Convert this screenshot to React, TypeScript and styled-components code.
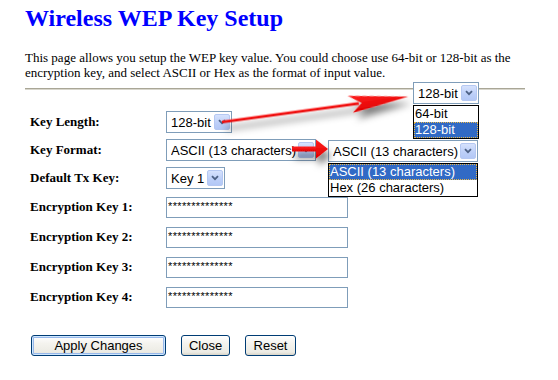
import React from "react";
import styled, { createGlobalStyle } from "styled-components";

const GlobalStyle = createGlobalStyle`
  html, body { margin: 0; padding: 0; background: #ffffff; }
  #root { width: 558px; height: 380px; overflow: hidden; }
`;

const Page = styled.div`
  position: relative;
  width: 558px;
  height: 380px;
  box-sizing: border-box;
  padding: 5px 0 0 25px;
  font-family: "Liberation Serif", "Times New Roman", serif;
  color: #000;
`;

const Title = styled.h1`
  margin: 0;
  font-size: 24px;
  line-height: 27px;
  font-weight: bold;
  color: #0000ff;
`;

const Intro = styled.p`
  margin: 19px 0 0 0;
  width: 500px;
  font-size: 13px;
  line-height: 14.5px;
`;

const Rule = styled.div`
  width: 500px;
  height: 0;
  margin-top: 8px;
  border-top: 1px solid #a9a696;
  border-bottom: 1px solid #d8d6cc;
`;

const Form = styled.div`
  margin-top: 18px;
  display: flex;
  flex-direction: column;
`;

const Row = styled.div<{ $h: number }>`
  display: grid;
  grid-template-columns: 141px auto;
  align-items: center;
  height: ${(p) => p.$h}px;
`;

const Label = styled.span`
  padding-left: 5px;
  font-size: 13px;
  font-weight: bold;
  white-space: nowrap;
`;

const SelectBox = styled.div<{ $w: number }>`
  width: ${(p) => p.$w}px;
  height: 22px;
  box-sizing: border-box;
  border: 1px solid #7f9db9;
  background: #ffffff;
  display: flex;
  align-items: center;
  padding: 2px 1px 2px 4px;
  font-family: "Liberation Sans", Arial, sans-serif;
  font-size: 13px;
  color: #000;
`;

const SelectValue = styled.span`
  flex: 1;
  white-space: nowrap;
  overflow: hidden;
`;

const DropButton = styled.span`
  width: 16px;
  height: 16px;
  box-sizing: border-box;
  flex: none;
  border: 1px solid #b5c8f2;
  border-radius: 2px;
  background: linear-gradient(#d6e2fd, #bccff8 60%, #b3c8f6);
  display: flex;
  align-items: center;
  justify-content: center;
`;

const Chevron = () => (
  <svg width="8" height="6" viewBox="0 0 8 6">
    <path d="M1 1.2 L4 4.2 L7 1.2" fill="none" stroke="#4d6185" strokeWidth="1.8" />
  </svg>
);

const Select = ({ width, value }: { width: number; value: string }) => (
  <SelectBox $w={width}>
    <SelectValue>{value}</SelectValue>
    <DropButton>
      <Chevron />
    </DropButton>
  </SelectBox>
);

const KeyInput = styled.input`
  width: 182px;
  height: 21px;
  box-sizing: border-box;
  border: 1px solid #7f9db9;
  padding: 0 0 2px 1px;
  margin: 0;
  font-family: "Liberation Sans", Arial, sans-serif;
  font-size: 11px;
  letter-spacing: 0.35px;
  color: #000;
  background: #fff;
  outline: none;
`;

const Buttons = styled.div`
  margin-top: 23px;
  padding-left: 6px;
  display: flex;
  gap: 15px;
`;

const Button = styled.button<{ $w: number; $default?: boolean }>`
  width: ${(p) => p.$w}px;
  height: 21px;
  box-sizing: border-box;
  margin: 0;
  padding: 0;
  border: 1px solid #003c74;
  border-radius: 3px;
  background: linear-gradient(#ffffff, #f4f3ee 40%, #ecebe4 85%, #d8d4c8);
  font-family: "Liberation Sans", Arial, sans-serif;
  font-size: 13px;
  color: #000;
  box-shadow: ${(p) =>
    p.$default ? "inset 0 0 0 1px #cee7ff, inset 0 0 0 2px #98b8ea" : "none"};
`;

const Popup = styled.div<{ $x: number; $y: number }>`
  position: absolute;
  left: ${(p) => p.$x}px;
  top: ${(p) => p.$y}px;
  display: flex;
  flex-direction: column;
  gap: 1px;
`;

const ListBox = styled.div<{ $w: number }>`
  width: ${(p) => p.$w}px;
  box-sizing: border-box;
  border: 1px solid #000;
  background: #fff;
  font-family: "Liberation Sans", Arial, sans-serif;
  font-size: 13px;
`;

const Option = styled.div<{ $selected?: boolean }>`
  height: 16px;
  line-height: 16px;
  padding-left: 1px;
  box-sizing: border-box;
  white-space: nowrap;
  color: ${(p) => (p.$selected ? "#fff" : "#000")};
  background: ${(p) => (p.$selected ? "#316ac5" : "#fff")};
  outline: ${(p) => (p.$selected ? "1px dotted #e9b84a" : "none")};
  outline-offset: -1px;
`;

const Overlay = styled.svg`
  position: absolute;
  left: 0;
  top: 0;
  pointer-events: none;
`;

const Arrows = () => {
  const L = 188;
  return (
    <Overlay width="558" height="380" viewBox="0 0 558 380">
      <defs>
        <filter id="shadow" x="-20%" y="-50%" width="140%" height="250%">
          <feDropShadow dx="3" dy="7" stdDeviation="3.5" floodColor="#000" floodOpacity="0.5" />
        </filter>
        <linearGradient id="red" x1="0" y1="0" x2="0" y2="1">
          <stop offset="0" stopColor="#ff2020" />
          <stop offset="1" stopColor="#e00000" />
        </linearGradient>
      </defs>
      <g filter="url(#shadow)" transform="translate(222 122) rotate(-7.75)">
        <rect x="0" y="-1.4" width={L - 50} height="2.8" fill="url(#red)" />
        <polygon
          points={`${L},0 ${L - 60},-9 ${L - 47},0 ${L - 57},8.5`}
          fill="url(#red)"
        />
      </g>
      <g filter="url(#shadow)">
        <rect x="292" y="146.5" width="26" height="5" fill="url(#red)" />
        <polygon points="328,149 316,139.5 316,158.5" fill="url(#red)" />
      </g>
    </Overlay>
  );
};

export default function App() {
  return (
    <>
      <GlobalStyle />
      <Page>
        <Title>Wireless WEP Key Setup</Title>
        <Intro>
          This page allows you setup the WEP key value. You could choose use 64-bit or 128-bit as the
          encryption key, and select ASCII or Hex as the format of input value.
        </Intro>
        <Rule />
        <Form>
          <Row $h={28}>
            <Label>Key Length:</Label>
            <Select width={66} value="128-bit" />
          </Row>
          <Row $h={28}>
            <Label>Key Format:</Label>
            <Select width={150} value="ASCII (13 characters)" />
          </Row>
          <Row $h={28}>
            <Label>Default Tx Key:</Label>
            <Select width={59} value="Key 1" />
          </Row>
          {[1, 2, 3, 4].map((n) => (
            <Row $h={30} key={n}>
              <Label>Encryption Key {n}:</Label>
              <KeyInput readOnly defaultValue="**************" />
            </Row>
          ))}
        </Form>
        <Buttons>
          <Button $w={135} $default>
            Apply Changes
          </Button>
          <Button $w={49}>Close</Button>
          <Button $w={51}>Reset</Button>
        </Buttons>

        <Popup $x={413} $y={82}>
          <Select width={66} value="128-bit" />
          <ListBox $w={66}>
            <Option>64-bit</Option>
            <Option $selected>128-bit</Option>
          </ListBox>
        </Popup>
        <Popup $x={328} $y={140}>
          <Select width={150} value="ASCII (13 characters)" />
          <ListBox $w={150}>
            <Option $selected>ASCII (13 characters)</Option>
            <Option>Hex (26 characters)</Option>
          </ListBox>
        </Popup>
        <Arrows />
      </Page>
    </>
  );
}
